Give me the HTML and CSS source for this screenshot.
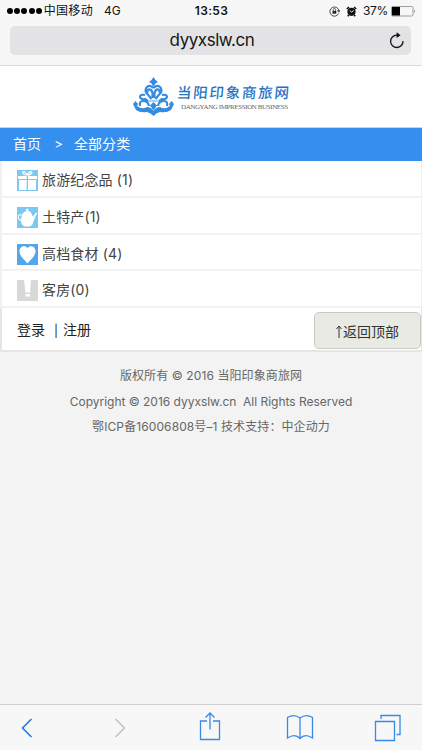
FILE: index.html
```
<!DOCTYPE html>
<html lang="zh-CN">
<head>
<meta charset="utf-8">
<title>当阳印象商旅网</title>
<link rel="stylesheet" href="styles.css">
</head>
<body>
<header class="browser">
  <div class="status">
    <div class="carrier"><span class="dots"><i></i><i></i><i></i><i></i><i></i></span><span class="operator">中国移动</span><span>4G</span></div>
    <strong class="time">13:53</strong>
    <div class="power">
      <svg width="11" height="11" viewBox="0 0 11 11"><path d="M9.600 7.600A4.600 4.600 0 1 1 10 4.800M8.600 4.700h2.200L9.800 6.200Z" fill="none" stroke="#222" stroke-width=".8"/><path d="M3.500 4.900h3.800v2.800H3.500z" fill="#222"/><path d="M4.200 4.900V3.700a1.200 1.200 0 0 1 2.400 0v1.200" fill="none" stroke="#222" stroke-width=".7"/></svg>
      <svg width="11" height="11" viewBox="0 0 11 11"><circle cx="5.500" cy="5.800" r="4.100" fill="#111"/><path d="M.8 3 3 1M8 1l2.200 2M2.800 9 1.800 10.200M8.200 9l1 1.200" stroke="#111" stroke-width="1.600"/><path d="m3.700 4.500 1.800 1.600 2.200-1.600" fill="none" stroke="#fff" stroke-width=".9"/></svg>
      <span class="percent">37%</span>
      <svg class="battery" width="25" height="11" viewBox="0 0 25 11"><rect x=".5" y=".5" width="21.500" height="9.500" rx="1.200" fill="none" stroke="#888" stroke-width=".8"/><path d="M1 1h8v8.500H1z" fill="#000"/><path d="M23 3.600q1.500 1.700 0 3.400z" fill="#555"/></svg>
    </div>
  </div>
  <div class="address"><span>dyyxslw.cn</span>
    <svg class="reload" width="16" height="17" viewBox="0 0 16 17"><path d="M9 3.100H7.800A6.200 6.200 0 1 0 14 9" fill="none" stroke="#111" stroke-width="1.300"/><path d="M7.600.3 11.600 3.200 7.600 6.100Z" fill="#111"/></svg>
  </div>
</header>
<main>
  <div class="brand">
    <svg class="emblem" width="41" height="40" viewBox="0 0 41 40">
      <path d="M20.500 0 22.500 3l2.500 2-2.500 1.500-2 3.500-2-3.500L16 5l2.500-2ZM0 27l2.500-3L5 27l-1 2q5 4 10 1 4 0 6.500 4 2.500-4 6.500-4 5 3 10-1l-1-2 2.500-3L41 27l-3 6q-4 3-11 2-4 1-6.500 4-2.500-3-6.500-4-7 1-11-2Z" fill="#348be0"/>
      <path d="M19.500 21V16q-1-4-4-3.500-2 1-.5 3M21.500 21V16q1-4 4-3.500 2 1 .5 3M20.500 11q-4-4-7-.5-2.500 4 1 6.500l4 5M20.500 11q4-4 7-.5 2.500 4-1 6.500l-4 5M12 18q-5-1-5 2 1 3 5 2l4 3M29 18q5-1 5 2-1 3-5 2l-4 3M7 29q-1-5 3-5 5 0 6 5M34 29q1-5-3-5-5 0-6 5" fill="none" stroke="#348be0" stroke-width="2.200"/>
      <path d="m20.500 25 3.500 3.500-3.500 5-3.500-5Z" fill="#348be0"/><path d="M15 24h11" stroke="#a9d0f5" stroke-width="2"/>
    </svg>
    <div class="wordmark"><span class="brand-cn">当阳印象商旅网</span><span class="brand-en">DANGYANG IMPRESSION BUSINESS</span></div>
  </div>
  <nav class="crumbs"><span>首页</span><span class="arrow">&gt;</span><span>全部分类</span></nav>
  <ul class="categories">
    <li><svg width="21" height="21" viewBox="0 0 21 21"><path fill="#7ac9f1" d="M0 0h21v21H0z"/><path fill="#fff" d="M1 6h8.700v3H1zM11 6h9v3h-9zM2 10h7.700v10H2zM11 10h8v10h-8z"/><path d="M10.300 5Q7 0 5.500 2.500 6 5 10.300 5q3.700 0 4.700-2.500Q13 0 10.300 5" fill="none" stroke="#fff" stroke-width="1.200"/></svg><span>旅游纪念品 (1)</span></li>
    <li><svg width="21" height="21" viewBox="0 0 21 21"><path fill="#7ac9f1" d="M0 0h21v21H0z"/><path d="M5 8Q6 4.500 10 4t5 4l1 1.500L18.500 6H20.500l-1 1.500-3 6.500Q16 18 13 19.500H7Q4 17.500 3.800 14Z" fill="#fff"/><path d="M5 8Q1.300 7 1.300 9.800t3 3.700" fill="none" stroke="#fff" stroke-width="1.100"/><circle cx="10.200" cy="3" r="1.300" fill="#fff"/></svg><span>土特产(1)</span></li>
    <li><svg width="21" height="21" viewBox="0 0 21 21"><path fill="#55a5ea" d="M0 0h21v21H0z"/><path d="M10.500 4.200C8.500.7 2.500 2 2.500 7c0 5 5 9 8 12.500 3-3.500 8-7.500 8-12.500 0-5-6-6.300-8-2.800Z" fill="#fff"/></svg><span>高档食材 (4)</span></li>
    <li><svg width="21" height="21" viewBox="0 0 21 21"><path fill="#d8d8d8" d="M0 0h21v21H0z"/><path d="M7 0h7L13 12.500H8.500ZM8.500 14H13V16.500H8.500Z" fill="#fff"/></svg><span>客房(0)</span></li>
  </ul>
  <div class="account"><div class="links"><span>登录</span><span class="divider">|</span><span>注册</span></div><button class="top"><svg width="8" height="13" viewBox="0 0 8 13"><path d="M4 13V1.500M1.500 4 4 1l2.500 3" fill="none" stroke="#333" stroke-width="1"/></svg><span>返回顶部</span></button></div>
</main>
<footer class="legal"><p class="rights">版权所有 © 2016 当阳印象商旅网</p><p class="copyright">Copyright © 2016 dyyxslw.cn&nbsp; All Rights Reserved</p><p class="record">鄂ICP备16006808号–1 技术支持：中企动力</p></footer>
<div class="toolbar">
  <svg width="12" height="20" viewBox="0 0 12 20"><path d="M10.500 1 1.500 10l9 9" fill="none" stroke="#1b73e8" stroke-width="1.500"/></svg>
  <svg width="12" height="20" viewBox="0 0 12 20"><path d="m1.500 1 9 9-9 9" fill="none" stroke="#bbb" stroke-width="1.200"/></svg>
  <svg class="share" width="22" height="29" viewBox="0 0 22 29"><path d="M8 9H1.500v18.500h19V9H14M11 17.500V1M6.500 5.500 11 1l4.500 4.500" fill="none" stroke="#3a88e8" stroke-width="1.300"/></svg>
  <svg width="28" height="27" viewBox="0 0 28 27"><path d="M14 4Q8-.5 1.500 3.500V24Q9 19 14 24.500 19 19 26.500 24V3.500Q20-.5 14 4v21" fill="none" stroke="#3a88e8" stroke-width="1.300"/></svg>
  <svg width="28" height="28" viewBox="0 0 28 28"><path d="M1.500 7.500h19v19h-19ZM7 5V1.500h19v19h-3.500" fill="none" stroke="#3a88e8" stroke-width="1.300"/></svg>
</div>
</body>
</html>
```
FILE: styles.css
```
* { box-sizing: border-box; }
body { margin: 0; width: 422px; height: 750px; display: flex; flex-direction: column; background: #f3f3f3; color: #444; font-family: Inter, "Noto Sans CJK SC", sans-serif; overflow: hidden; }
svg { display: block; flex: none; }
span { white-space: nowrap; }
.browser { height: 66px; background: #f7f7f7; border-bottom: 1px solid #dcdcdd; flex: none; }
.status { height: 26px; padding: 0 6px 4px 7px; display: grid; grid-template-columns: 1fr auto 1fr; align-items: center; font-size: 12px; line-height: 22px; color: #111; }
.carrier, .power, .dots { display: flex; align-items: center; }
.dots { gap: 1.200px; margin-right: 2px; }
.dots i { width: 6px; height: 6px; border-radius: 50%; background: #000; }
.operator { margin-right: 11px; letter-spacing: .3px; }
.time { font-weight: 600; letter-spacing: .35px; }
.time + .power { padding-top: 0; }
.power { justify-content: flex-end; gap: 6px; }
.percent { letter-spacing: -.3px; }
.battery { margin-left: -3px; }
.address { height: 29px; margin: 0 11px 0 10px; border-radius: 5px; background: #e3e3e5; display: grid; grid-template-columns: 25px 1fr 16px; padding-right: 6px; align-items: center; font-size: 17px; line-height: 29px; color: #151515; }
.address span { grid-column: 2; justify-self: center; letter-spacing: -.45px; }
.brand { height: 62px; background: #fff; display: flex; padding: 11px 0 0 133px; gap: 3px; border-bottom: 1px solid #b8d8f9; }
.wordmark { display: flex; flex-direction: column; padding-top: 4px; }
.brand-cn { color: #2474c4; font: 500 14.500px/22px "Noto Sans CJK SC", sans-serif; letter-spacing: 1.750px; transform: skewX(-5deg); }
.brand-en { font: 7px/8px "Liberation Serif", serif; color: #666; margin-left: 4px; letter-spacing: -.4px; }
.crumbs { height: 33px; background: #348fee; color: #fff; padding-left: 13px; display: flex; font-size: 14px; line-height: 32px; letter-spacing: .1px; }
.arrow { margin: 0 11px 0 13px; font-size: 13px; }
.categories { list-style: none; margin: 0; padding: 0; border: solid #f1f1f1; border-width: 0 1px 0 2px; background: #fff; }
.categories li { height: 36.700px; border-bottom: 2px solid #f2f2f2; display: flex; align-items: center; gap: 4px; padding: 4px 0 0 15px; font-size: 14px; line-height: 30px; color: #444; }
.categories li:first-child { height: 37px; }
.categories li > span { margin-top: -1px; letter-spacing: .15px; }
.account { height: 44px; background: #fff; border: solid #e5e5e5; border-width: 0 1px 2px 2px; display: flex; justify-content: space-between; padding: 3.500px 0 2px 15px; }
.links { display: flex; font-size: 14px; line-height: 36px; color: #222; }
.divider { margin: 0 5px 0 9px; font-size: 12px; line-height: 38px; }
.top { width: 107px; height: 37px; border: 1px solid #c9cac5; border-radius: 5px; background: #e9eae4; color: #333; display: flex; align-items: center; justify-content: center; padding: 3px 1px 0 0; font: 14px/20px Inter, "Noto Sans CJK SC", sans-serif; }
.legal { padding-top: 11px; flex: 1; text-align: center; color: #666; font-size: 12px; line-height: 25.500px; }
.legal p { margin: 0; white-space: nowrap; }
.rights { letter-spacing: .1px; }
.copyright { letter-spacing: -.02px; }
.record { letter-spacing: .1px; }
.toolbar { height: 46px; flex: none; border-top: 1px solid #cfcfcf; background: #f7f7f7; display: grid; grid-template-columns: 93px 85px 87px 88px 28px; align-items: center; padding: 0 0 0 21px; }
.share { margin: 0 0 3px; }
.toolbar svg:nth-child(4) { margin-bottom: 1px; }
```
